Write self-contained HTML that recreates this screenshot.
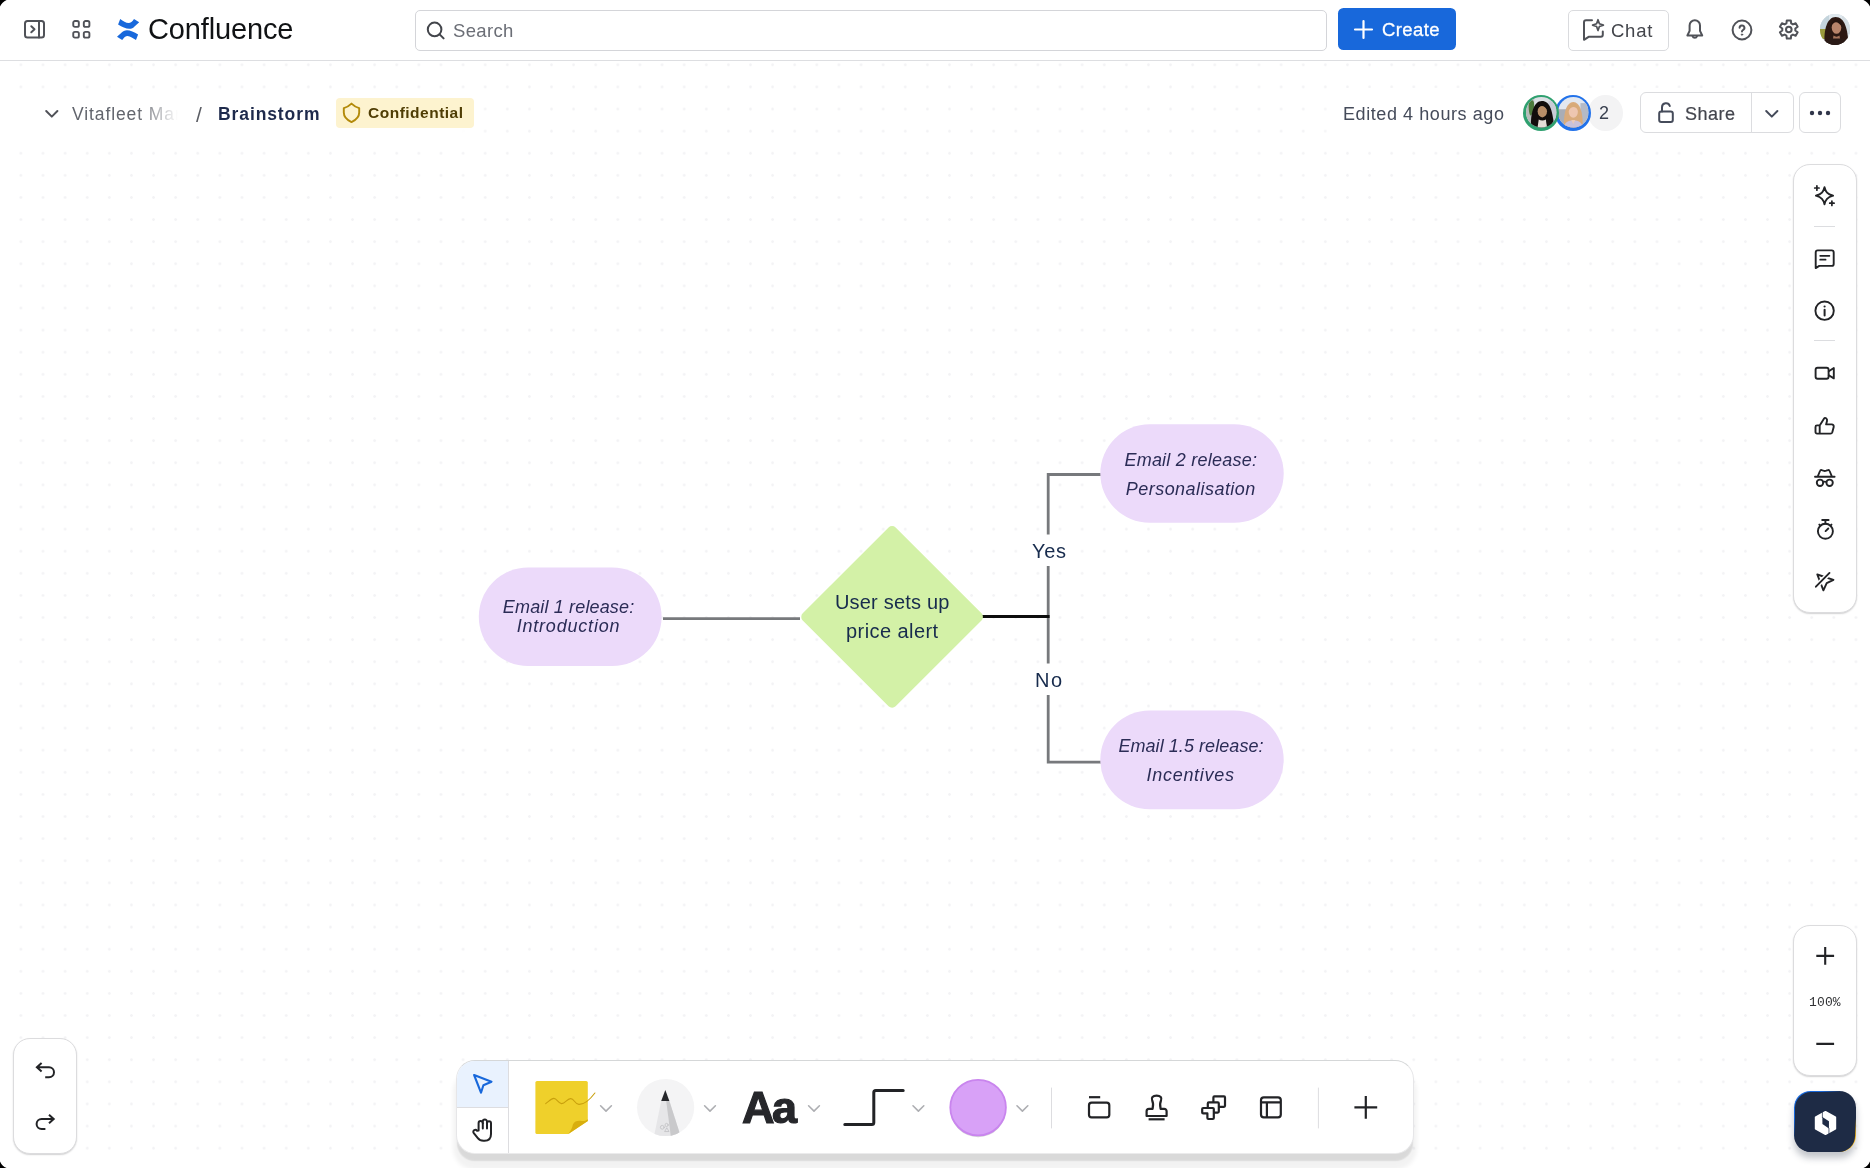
<!DOCTYPE html>
<html lang="en">
<head>
<meta charset="utf-8">
<title>Brainstorm - Confluence</title>
<style>
*{box-sizing:border-box;margin:0;padding:0}
html,body{width:1870px;height:1168px;overflow:hidden;background:#fff}
body{position:relative;font-family:"Liberation Sans",sans-serif;color:#292a2e;-webkit-font-smoothing:antialiased}
.abs{position:absolute}
.t{position:absolute;white-space:nowrap;line-height:1;will-change:transform}
svg{position:absolute;overflow:visible}
#canvas{left:0;top:61px;width:1870px;height:1107px;background-color:#fff;
 background-image:radial-gradient(circle,#f3f3f5 0 1px,transparent 1.6px);
 background-size:22.120px 22.120px;background-position:9.840px -7.260px}
#hdrfade{left:0;top:92px;width:490px;height:50px;background:linear-gradient(90deg,#fff 0 94%,rgba(255,255,255,0))}
#hdrfade2{left:1320px;top:88px;width:550px;height:50px;background:linear-gradient(270deg,#fff 0 96%,rgba(255,255,255,0))}
#topnav{left:0;top:0;width:1870px;height:61px;background:#fff;border-bottom:1.5px solid #dddee1}
.btn{position:absolute;border:1.200px solid #dbdcdf;border-radius:6px;background:#fff}
.panel{position:absolute;background:#fff;border:1px solid #dcdcde;box-shadow:0 1px 1.500px rgba(30,31,33,.2)}
</style>
</head>
<body>
<div id="canvas" class="abs"></div>
<div id="hdrfade" class="abs"></div><div id="hdrfade2" class="abs"></div>
<div id="topnav" class="abs"></div><div class="abs" style="left:0;top:61px;width:6px;height:1107px;background:#fff"></div>

<!-- TOPNAV -->
<svg style="left:23px;top:19px" width="23" height="21" viewBox="0 0 23 21" fill="none" stroke="#505258" stroke-width="2" stroke-linejoin="round" stroke-linecap="round"><rect x="2" y="2" width="19" height="16.5" rx="2.5"/><path d="M16 2v16.5M8.300 7.300l3.200 3-3.200 3"/></svg>
<svg style="left:71px;top:19px" width="21" height="21" viewBox="0 0 21 21" fill="none" stroke="#505258" stroke-width="1.900"><rect x="2.250" y="2.050" width="5.600" height="5.800" rx="1.700"/><rect x="12.800" y="2.050" width="5.600" height="5.800" rx="1.700"/><rect x="2.250" y="12.850" width="5.600" height="5.800" rx="1.700"/><rect x="12.800" y="12.850" width="5.600" height="5.800" rx="1.700"/></svg>
<svg style="left:117px;top:19px" width="23" height="21" viewBox="0 0 23 21"><path d="M3.2 0 L1.1 5.600 C5 8 9 9.800 12.2 9.800 C14.500 9.800 16.500 8.600 17.500 7.400 L22.2 3.300 L17 0 C15.500 2.500 13.500 4.100 11.600 4.100 C9 4.100 6 1.800 3.200 0Z" fill="#1868db"/><path d="M19 21 L21.100 15.400 C17.200 13 13.200 11.200 10 11.200 C7.700 11.200 5.700 12.400 4.700 13.600 L0 17.700 L5.200 21 C6.700 18.500 8.700 16.900 10.600 16.900 C13.200 16.900 16.200 19.200 19 21Z" fill="#1868db"/></svg>
<span class="t" id="logotxt" style="left:148px;top:15px;font-size:29px;color:#101214;letter-spacing:-0.15px">Confluence</span>
<div class="btn" style="left:414.500px;top:9.500px;width:912px;height:41px;border:1.300px solid #d4d5d9;border-radius:5px"></div>
<svg style="left:424.500px;top:18.600px" width="22" height="22" viewBox="0 0 22 22" fill="none" stroke="#43454b" stroke-width="2" stroke-linecap="round"><circle cx="9.6" cy="10.4" r="6.8"/><path d="M14.6 15.4l4 4"/></svg>
<span class="t" id="search" style="left:453.200px;top:21.900px;font-size:18.500px;color:#6b6e76;letter-spacing:.35px">Search</span>
<div class="abs" style="left:1337.5px;top:8.300px;width:118.5px;height:41.5px;background:#1868db;border-radius:5.5px"></div>
<svg style="left:1353px;top:19px" width="21" height="21" viewBox="0 0 21 21" fill="none" stroke="#fff" stroke-width="2.2" stroke-linecap="round"><path d="M10.5 2v17M2 10.5h17"/></svg>
<span class="t" style="left:1382px;top:20.5px;font-size:18.5px;color:#fff;-webkit-text-stroke:.3px #fff;letter-spacing:.4px" id="createtxt">Create</span>
<div class="btn" style="left:1567.500px;top:9.500px;width:101px;height:41px;border-color:#dadbde;border-radius:5px"></div>
<svg style="left:1581px;top:17px" width="25" height="25" viewBox="0 0 25 25" fill="none" stroke="#505258" stroke-width="2" stroke-linejoin="round" stroke-linecap="round"><path d="M11 3.300H5a2 2 0 0 0-2 2V22.800l4.600-3H19.800a2 2 0 0 0 2-2V14.500"/><path d="M17 2.700l1.400 4 4 1.400-4 1.400-1.400 4-1.400-4-4-1.400 4-1.400z" stroke-width="1.700"/></svg>
<span class="t" style="left:1611.300px;top:22px;font-size:18.500px;color:#43454b;letter-spacing:.75px" id="chattxt">Chat</span>
<svg style="left:1683px;top:18px" width="23" height="24" viewBox="1683 18 23 24" fill="none" stroke="#505258" stroke-width="2" stroke-linejoin="round" stroke-linecap="round"><path d="M1687.400 35.500h14.800l-2.200-4.600v-5.400a5.200 5.200 0 0 0-10.400 0v5.400z"/><path d="M1692.600 36.200a2.300 2.300 0 0 0 4.400 0"/></svg>
<svg style="left:1729.600px;top:17.500px" width="24" height="24" viewBox="0 0 24 24" fill="none" stroke="#505258" stroke-width="2" stroke-linecap="round"><circle cx="12" cy="12" r="9.400"/><path d="M9.600 9.800a2.400 2.400 0 1 1 3.400 2.200c-.7.400-1 .8-1 1.600"/><circle cx="12" cy="16.600" r=".7" fill="#505258" stroke-width="1"/></svg>
<svg style="left:1777px;top:18px" width="24" height="24" viewBox="1777 18 24 24" fill="none" stroke="#505258" stroke-width="2" stroke-linejoin="round"><path d="M1791.17 23.34 L1790.81 20.42 L1786.79 20.42 L1786.43 23.34 L1784.65 24.37 L1781.94 23.22 L1779.93 26.70 L1782.28 28.47 L1782.28 30.53 L1779.93 32.30 L1781.94 35.78 L1784.65 34.63 L1786.43 35.66 L1786.79 38.58 L1790.81 38.58 L1791.17 35.66 L1792.95 34.63 L1795.66 35.78 L1797.67 32.30 L1795.32 30.53 L1795.32 28.47 L1797.67 26.70 L1795.66 23.22 L1792.95 24.37Z"/><circle cx="1788.8" cy="29.5" r="2.800"/></svg>
<div class="abs" id="me" style="left:1819.700px;top:14px;width:30.800px;height:31px;border-radius:50%;overflow:hidden;background:#cfd6dc"><svg style="left:0;top:0" width="31" height="31" viewBox="0 0 31 31"><rect width="31" height="31" fill="#dfe8ee"/><rect x="0" y="0" width="9" height="17" fill="#c4d4dc"/><rect x="22" y="0" width="9" height="20" fill="#d5dde2"/><path d="M0 15h8v10H0z" fill="#9a9a3c"/><path d="M5 32C3 20 6 3 15.500 3S28 16 28.500 32z" fill="#2c1812"/><ellipse cx="16.500" cy="13.500" rx="4.800" ry="6.300" fill="#b9846a"/><path d="M10.500 12.500c.5-5.500 4-7.500 6.500-7s5.500 2.500 5 7.500c-2-3-4.200-4.800-6-4.800s-3.500 1.800-5.500 4.300z" fill="#26140f"/><path d="M5 32c1-6 5-9 11-9s10 3 11 9z" fill="#2a1a16"/><path d="M13.500 21.500c1.500 1.500 4.500 1.500 6 0l.5 3h-7z" fill="#a8755c"/></svg></div>
<!-- HEADER -->
<svg style="left:44px;top:108px" width="16" height="12" viewBox="0 0 16 12" fill="none" stroke="#505258" stroke-width="2" stroke-linecap="round" stroke-linejoin="round"><path d="M2.200 3l5.600 5.600L13.400 3"/></svg>
<span class="t" id="crumb1" style="left:72px;top:105.600px;font-size:17.5px;color:#62656d;letter-spacing:.9px;width:106px;overflow:hidden;-webkit-mask-image:linear-gradient(90deg,#000 0 62%,transparent 100%);mask-image:linear-gradient(90deg,#000 0 62%,transparent 100%)">Vitafleet Marketing</span>
<span class="t" id="slash" style="left:196px;top:103.500px;font-size:21px;color:#5a5c63">/</span>
<span class="t" id="crumb2" style="left:218px;top:105.600px;font-size:17.5px;font-weight:bold;color:#1e2a4c;letter-spacing:.9px">Brainstorm</span>
<div class="abs" style="left:335.500px;top:97.800px;width:138.500px;height:30.400px;background:#fdf3cf;border-radius:4px"></div>
<svg style="left:341px;top:102px" width="22" height="23" viewBox="0 0 22 23" fill="none" stroke="#b38a0a" stroke-width="1.900" stroke-linejoin="round"><path d="M10.500 1.600Q7 5 2.800 6.100V10.500C2.800 14.500 5.600 17.800 10.500 20.100C15.400 17.800 18.200 14.500 18.200 10.500V6.100Q14 5 10.500 1.600Z"/></svg>
<span class="t" id="conf" style="left:368px;top:105.300px;font-size:15.5px;font-weight:bold;color:#4f3d04;letter-spacing:.5px">Confidential</span>
<span class="t" id="edited" style="left:1342.800px;top:104.500px;font-size:18px;color:#454b5a;letter-spacing:.58px">Edited 4 hours ago</span>
<div class="abs" style="left:1588px;top:95px;width:34.500px;height:35.500px;border-radius:50%;background:#f3f3f4"></div>
<span class="t" id="two" style="left:1598.900px;top:104px;font-size:18px;color:#3a4150">2</span>
<div class="abs" style="left:1555.300px;top:94.500px;width:36px;height:36px;border-radius:50%;background:#2272ea;overflow:hidden"><svg style="left:2.700px;top:2.700px" width="30.600" height="30.600" viewBox="0 0 30 30"><clipPath id="ca"><circle cx="15" cy="15" r="15"/></clipPath><g clip-path="url(#ca)"><rect width="30" height="30" fill="#e3e8f0"/><rect x="0" y="12" width="8" height="18" fill="#a9adb6"/><rect x="22" y="6" width="8" height="24" fill="#b4bac6"/><path d="M6 32C5 20 7 5 15 5s10 15 9 27z" fill="#d9ab7c"/><ellipse cx="15" cy="14.500" rx="4.500" ry="5.800" fill="#eec6b0"/><path d="M9.800 14c.4-6 3.400-8 5.700-7.600s5 2.600 4.900 7.600c-1.800-3-3.300-4.200-5.200-4.200s-3.600 1.500-5.400 4.200z" fill="#d8aa78"/><path d="M5 32c1-7 4.500-9 10-9s9 2 10 9z" fill="#c9c1d9"/><path d="M13 22.500l2 4 2-4z" fill="#eccab8"/></g></svg></div>
<div class="abs" style="left:1523px;top:94.500px;width:36px;height:36px;border-radius:50%;background:#2fa06f;overflow:hidden"><svg style="left:2.700px;top:2.700px" width="30.600" height="30.600" viewBox="0 0 30 30"><g clip-path="url(#ca)"><rect width="30" height="30" fill="#dcdfe4"/><rect x="0" y="0" width="8" height="30" fill="#b7bcbb"/><path d="M3 4c2-2 5-1 5 3s-1 9-3 11-3-10-2-14z" fill="#4d7a3c"/><rect x="22" y="4" width="8" height="20" fill="#c9ccd6"/><path d="M5 32C4 18 7 4 15.500 4S26 14 28 32z" fill="#120d0c"/><ellipse cx="16" cy="14" rx="4.600" ry="6" fill="#b98e68"/><path d="M10 13.500c.5-6 4-8 6.500-7.500s5.500 3 5 7.500c-2-3-3.800-4.600-5.800-4.600s-3.700 2-5.700 4.600z" fill="#120d0c"/><path d="M12.500 22c2 1.500 5 1.500 7 0l1.500 10h-10z" fill="#e5ddd6"/><path d="M20 21c4 1 7 4 8 11h-7z" fill="#16110f"/></g></svg></div>
<div class="btn" style="left:1640px;top:92.300px;width:153.500px;height:41.200px"></div>
<div class="abs" style="left:1750.500px;top:93px;width:1px;height:40px;background:#dcdde0"></div>
<svg style="left:1655px;top:100px" width="22" height="25" viewBox="0 0 22 25" fill="none" stroke="#454b5a" stroke-width="2" stroke-linejoin="round" stroke-linecap="round"><rect x="4.200" y="11.500" width="13.600" height="10.500" rx="2"/><path d="M7 11.500V7.200a4 4 0 0 1 7.800-1.200"/></svg>
<span class="t" id="share" style="left:1685px;top:104.500px;font-size:18px;color:#43454d;letter-spacing:.5px;-webkit-text-stroke:.2px #43454d">Share</span>
<svg style="left:1764px;top:108px" width="16" height="12" viewBox="0 0 16 12" fill="none" stroke="#454b5a" stroke-width="2" stroke-linecap="round" stroke-linejoin="round"><path d="M2.200 3l5.600 5.600L13.400 3"/></svg>
<div class="btn" style="left:1799px;top:92.300px;width:41.700px;height:41.200px"></div>
<svg style="left:1808px;top:109px" width="24" height="8" viewBox="0 0 24 8" fill="#30364a"><circle cx="4" cy="4" r="2.200"/><circle cx="12" cy="4" r="2.200"/><circle cx="20" cy="4" r="2.200"/></svg>
<!-- DIAGRAM -->
<svg id="diagram" style="left:0;top:0" width="1870" height="1168" viewBox="0 0 1870 1168" font-family="'Liberation Sans',sans-serif">
<g fill="none" stroke="#77797c" stroke-width="2.800">
<path d="M663 618.600H800"/>
<path d="M1101 474.500H1048.200V534.500M1048.200 566V663.500M1048.200 695V762.200H1101"/>
</g>
<path d="M982 616.500H1049.600" stroke="#0d0d0d" stroke-width="3" fill="none"/>
<rect x="478.800" y="567.600" width="182.800" height="98.400" rx="49.200" fill="#ecdafa"/>
<rect x="1100.300" y="424.200" width="183.400" height="98.600" rx="49.300" fill="#ecdafa"/>
<rect x="1100.300" y="710.600" width="183.400" height="98.600" rx="49.300" fill="#ecdafa"/>
<rect x="826.400" y="551.200" width="131.400" height="131.400" rx="5" transform="rotate(45 892.100 616.900)" fill="#d3f1a7"/>
<g font-style="italic" font-size="18px" fill="#2b2c56" text-anchor="middle">
<text id="e1a" letter-spacing="0.15" x="568.600" y="612.800">Email 1 release:</text>
<text id="e1b" letter-spacing="0.80" x="568.500" y="631.800">Introduction</text>
<text id="e2a" letter-spacing="0.23" x="1190.800" y="465.600">Email 2 release:</text>
<text id="e2b" letter-spacing="0.46" x="1190.800" y="494.500">Personalisation</text>
<text id="e3a" letter-spacing="0.06" x="1191" y="751.800">Email 1.5 release:</text>
<text id="e3b" letter-spacing="0.70" x="1190.600" y="780.700">Incentives</text>
</g>
<g font-size="20px" fill="#172b4d" text-anchor="middle">
<text id="d1" letter-spacing="0.20" x="892.300" y="609.400">User sets up</text>
<text id="d2" letter-spacing="0.42" x="892.300" y="637.600">price alert</text>
<text id="yes" letter-spacing="0.60" x="1049.300" y="558.200">Yes</text>
<text id="no" letter-spacing="1.60" x="1049.400" y="687.100">No</text>
</g>
</svg>
<!-- RIGHTBAR -->
<div class="panel" style="left:1793.200px;top:164px;width:63.800px;height:449px;border-radius:17px"></div>
<div class="abs" style="left:1814px;top:226.300px;width:21px;height:1px;background:#dcdde0"></div>
<div class="abs" style="left:1814px;top:340.100px;width:21px;height:1px;background:#dcdde0"></div>
<svg id="rbicons" style="left:1794px;top:164px" width="63" height="449" viewBox="1794 164 63 449" fill="none" stroke="#222326" stroke-width="1.900" stroke-linecap="round" stroke-linejoin="round">
<!-- sparkle -->
<path d="M1824.500 187.200c1.100 4.600 2.800 6.800 8.600 8.500-5.800 1.600-7.500 3.800-8.600 8.600-1.100-4.800-2.800-7-8.600-8.600 5.800-1.700 7.500-3.900 8.600-8.500z"/>
<path d="M1816.900 185.800v4.400M1814.700 188h4.400M1831.900 201v4.400M1829.700 203.200h4.400" stroke-width="1.700"/>
<!-- comment -->
<path d="M1817.700 250.400h14a2 2 0 0 1 2 2v11.500a2 2 0 0 1-2 2h-12.400l-3.600 2.200V252.400a2 2 0 0 1 2-2z"/>
<path d="M1820.200 255.800h9.200M1820.200 259.700h5.400" stroke-width="1.700"/>
<!-- info -->
<circle cx="1824.600" cy="310.700" r="9.200"/>
<path d="M1824.600 309.800v5.700" stroke-width="2"/><circle cx="1824.600" cy="306.500" r="1.100" fill="#222326" stroke="none"/>
<!-- video -->
<rect x="1815.600" y="367.700" width="13" height="11" rx="2"/>
<path d="M1828.800 371.200l5-3.200v10.400l-5-3.200"/>
<!-- thumb -->
<path d="M1819.700 425.400h-2.700a1.500 1.500 0 0 0-1.500 1.500v5.200a1.500 1.500 0 0 0 1.500 1.500h2.700zM1819.700 425.400l4.400-6.900c.5-.8 1.400-.7 2-.2.900.7 1.200 1.700.9 2.800l-.9 3.300h5.600a2 2 0 0 1 2 2.500l-1.400 5.300a2 2 0 0 1-2 1.400h-10.600"/>
<!-- incognito -->
<path d="M1815 476.700h19.600M1817.700 476.500l2.300-5.500c.3-.8 1-1.100 1.800-.8l1.500.5c1 .3 2 .3 3 0l1.500-.5c.8-.3 1.500 0 1.800.8l2.300 5.500"/>
<circle cx="1820" cy="482.800" r="3.200"/><circle cx="1829.600" cy="482.800" r="3.200"/><path d="M1823.200 482.200c1-.7 2.200-.7 3.200 0" stroke-width="1.600"/>
<!-- timer -->
<circle cx="1825.400" cy="531.300" r="7.500"/>
<path d="M1822.200 520h6.400M1825.400 520v3.600M1819.300 524.600l1.100 1.100M1831.500 524.600l-1.100 1.100M1825.600 531.100l2.700-2.600"/>
<!-- cursor off -->
<path d="M1817.300 574.500l16.200 5.300-6.800 3.300-3.300 7.200z"/>
<path d="M1814.500 588.100l16.400-16.600" stroke="#fff" stroke-width="4.800" stroke-linecap="butt"/>
<path d="M1815.900 586.700l13.600-13.800"/>
</svg>
<!-- ZOOM -->
<div class="panel" style="left:1793.200px;top:924.500px;width:63.800px;height:151.500px;border-radius:17px"></div>
<svg style="left:1794px;top:925px" width="63" height="151" viewBox="1794 925 63 151" fill="none" stroke="#222326" stroke-width="2.100" stroke-linecap="butt"><path d="M1825.200 947v17.800M1816.300 955.900h17.800M1816.300 1043.900h17.800"/></svg>
<span class="t" id="zpct" style="left:1808.600px;top:995.500px;font-family:'Liberation Mono',monospace;font-size:13px;color:#303134;letter-spacing:.15px">100%</span>
<div class="abs" style="left:1793.900px;top:1091.200px;width:62px;height:61px;border-radius:16.600px;background:linear-gradient(135deg,#1868db 0 22%,#1e2b45 40% 72%,#e8ad1c 88% 100%);box-shadow:0 6px 7px rgba(20,30,50,.26)"></div><div class="abs" style="left:1794.600px;top:1091.800px;width:60.600px;height:59.800px;border-radius:16px;background:#1e2b45"></div>
<svg style="left:1813px;top:1110px" width="25" height="26" viewBox="-12.500 -13 25 26"><path d="M0 -11.300L9.900 -5.700V5.700L0 11.300L-9.900 5.700V-5.700Z" fill="#fff" stroke="#fff" stroke-width="1.600" stroke-linejoin="round"/><path d="M-3.100 -5.900L3.450 -1.700V5.500L-3.100 1.100Z" fill="#1e2b45"/><path d="M-3.100 -11V-5M3.450 5V11" stroke="#1e2b45" stroke-width=".7"/></svg>
<!-- UNDO -->
<div class="panel" style="left:13.200px;top:1038.300px;width:63.800px;height:116.200px;border-radius:17px"></div>
<svg style="left:14px;top:1039px" width="63" height="116" viewBox="14 1039 63 116" fill="none" stroke="#222326" stroke-width="2" stroke-linecap="butt" stroke-linejoin="miter"><path d="M41.600 1063l-4.700 4.200 4.700 4.200M37.200 1067.200h11.800a5 5 0 0 1 0 10h-3.800"/><path d="M49 1114.800l4.700 4.200-4.700 4.200M53.400 1119H41.600a5 5 0 0 0 0 10h3.800"/></svg>
<!-- TOOLBAR -->
<div class="abs" id="toolbar" style="left:456px;top:1060px;width:957.500px;height:94.300px;border-radius:19px;background:#fff;border:1px solid #e6e6e8;border-top-color:#d5d7d8;border-bottom-color:#ebebec;box-shadow:0 8px 1.5px -1px rgba(0,0,0,.105),0 13px 4px 3px rgba(0,0,0,.05);overflow:hidden">
<div class="abs" style="left:0;top:0;width:51px;height:46.500px;background:#e9f2fe"></div>
<div class="abs" style="left:0;top:46.300px;width:51px;height:1px;background:#dddde0"></div>
<div class="abs" style="left:50.900px;top:0;width:1px;height:94px;background:#dddde0"></div>
</div>
<svg id="tbicons" style="left:456px;top:1060px" width="958" height="95" viewBox="456 1060 958 95" fill="none" stroke="#222326" stroke-width="2.200" stroke-linecap="round" stroke-linejoin="round">
<!-- cursor -->
<path d="M474.100 1075l17.400 6.700-8.100 3.600-2.400 7.400z" stroke="#1868db" stroke-width="2.100"/>
<!-- hand -->
<path d="M478.600 1130.600V1123.200a2.100 2.100 0 0 1 4.200 0v-1.600a2.100 2.100 0 0 1 4.200 0v1.600a2 2 0 0 1 4 0v10.800c0 4.600-2.800 6.800-6.400 6.800h-1.200c-2.600 0-4.200-.9-5.800-2.900l-3.800-4.800c-.9-1.200-.5-2.500.5-3 1-.5 2.100-.2 2.800.7z" stroke-width="2"/>
<path d="M482.800 1123.200v5.400M487 1123.200v5.400" stroke-width="2"/>
<!-- sticky -->
<path d="M537 1081h49.200a1.600 1.600 0 0 1 1.600 1.600v38.500l-19.400 12.900H537a1.600 1.600 0 0 1-1.600-1.600v-49.800a1.600 1.600 0 0 1 1.600-1.600z" fill="#efd02b" stroke="none"/>
<path d="M568.300 1134c2.500-3.200 4-6 4.600-9.400 1.600-3.400 4.800-4.200 8.600-3.600 2.400.3 4.600-.4 6.300-1.800v1.900z" fill="#d8ae0e" stroke="none"/>
<path d="M545.700 1103.600c3.200-2.200 5.400-5.200 8.200-5.200 3 0 4.200 4.800 7.600 5.200 3.600.3 5.200-4.600 9-5 3.800-.3 4 5.600 8.400 5.800 5.600.2 11.800-5.800 16-11.400" stroke="#c9a00d" stroke-width="1.100"/>
<path d="M600.6 1105.800l5.400 5.300 5.400-5.300" stroke="#adaeb2" stroke-width="1.600" fill="none" stroke-linecap="round" stroke-linejoin="round"/>
<!-- pencil -->
<circle cx="665.600" cy="1107.500" r="28.600" fill="#f4f4f5" stroke="none"/>
<clipPath id="pc"><circle cx="665.600" cy="1107.500" r="28.600"/></clipPath>
<g clip-path="url(#pc)" stroke="none"><path d="M661.200 1100.900h8.200l11.500 36h-27z" fill="#e6e6e8"/><path d="M666.200 1100.900h3.200l11.500 36h-10z" fill="#c9c9cb"/><path d="M665.300 1090l4.100 10.900h-8.200z" fill="#26272b"/><circle cx="662.300" cy="1127.300" r="1.900" fill="none" stroke="#b5b5b8" stroke-width=".6"/><circle cx="666.600" cy="1125" r="1.600" fill="none" stroke="#b5b5b8" stroke-width=".6"/><path d="M664.800 1131.200l2-3.400 2 3.400z" fill="none" stroke="#b5b5b8" stroke-width=".6"/></g>
<path d="M704.6 1105.800l5.400 5.300 5.400-5.300" stroke="#adaeb2" stroke-width="1.600" fill="none" stroke-linecap="round" stroke-linejoin="round"/>
<path d="M808.6 1105.800l5.400 5.300 5.400-5.300" stroke="#adaeb2" stroke-width="1.600" fill="none" stroke-linecap="round" stroke-linejoin="round"/>
<!-- connector -->
<path d="M844.800 1124.500h27a2 2 0 0 0 2-2v-29.900a2 2 0 0 1 2-2h27.400" stroke-width="3"/>
<path d="M913.0 1105.800l5.400 5.300 5.400-5.300" stroke="#adaeb2" stroke-width="1.600" fill="none" stroke-linecap="round" stroke-linejoin="round"/>
<ellipse cx="978.100" cy="1109" rx="27.800" ry="28.200" fill="#b9b9be" stroke="none" opacity=".6"/><circle cx="978.100" cy="1107.600" r="27.800" fill="#d8a1f7" stroke="#c985ee" stroke-width="1.800"/>
<path d="M1017.0 1105.800l5.400 5.300 5.400-5.300" stroke="#adaeb2" stroke-width="1.600" fill="none" stroke-linecap="round" stroke-linejoin="round"/>
<path d="M1051.500 1088v40M1318.400 1088v40" stroke="#dddde0" stroke-width="1"/>
<!-- section -->
<rect x="1089" y="1102.600" width="20.300" height="14.700" rx="2.600"/><path d="M1089 1097.200h11.200" stroke-linecap="butt"/>
<!-- stamp -->
<path d="M1152.600 1108.800c.9-3.800.6-6.200-.4-8.200-1.300-2.800.6-5 4.400-5s5.700 2.200 4.400 5c-1 2-1.300 4.400-.4 8.200h3.600a2.400 2.400 0 0 1 2.400 2.400v4.800h-20v-4.800a2.400 2.400 0 0 1 2.400-2.400z"/><path d="M1148.600 1119.300h16" stroke-linecap="butt"/>
<!-- shapes -->
<rect x="1213.400" y="1096.400" width="11.600" height="10.400" rx="1" fill="#fff"/>
<rect x="1207.800" y="1102.400" width="11" height="10.200" rx="1" fill="#fff"/>
<path d="M1203.200 1108h9.600a1 1 0 0 1 1 1v9a1 1 0 0 1-1 1h-4.400a1 1 0 0 1-1-1v-4.600h-4.200a1 1 0 0 1-1-1v-3.400a1 1 0 0 1 1-1z" fill="#fff"/>
<!-- template -->
<rect x="1261" y="1097.300" width="19.800" height="20" rx="2.800"/><path d="M1261 1102.400h19.800M1266.900 1102.400v14.900" stroke-linecap="butt"/>
<!-- plus -->
<path d="M1365.800 1096v22.800M1354.400 1107.400h22.800" stroke-linecap="butt"/>
</svg>
<span class="t" id="aa" style="left:742.200px;top:1085.300px;font-size:45px;font-weight:bold;color:#26272b;letter-spacing:-2.500px;-webkit-text-stroke:1.200px #26272b">Aa</span>
<!-- CORNERS -->
<svg style="left:0;top:0" width="1870" height="1168" viewBox="0 0 1870 1168"><path d="M0 0h6.600Q2 2 0 6.600zM1870 0v6.600Q1868 2 1863.400 0zM0 1168v-6.600Q2 1166 6.600 1168zM1870 1168h-6.600Q1868 1166 1870 1161.400z" fill="#000"/></svg>
</body>
</html>
